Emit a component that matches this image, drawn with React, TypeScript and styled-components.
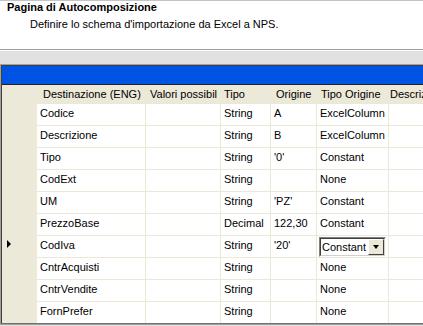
import React from 'react'
import styled, { createGlobalStyle } from 'styled-components'

const GlobalStyle = createGlobalStyle`
  html, body {
    margin: 0;
    padding: 0;
    overflow: hidden;
    background: #e1e1e1;
    font-family: "Liberation Sans", Arial, sans-serif;
    font-size: 11px;
    color: #000;
  }
`

const Page = styled.div`
  width: 423px;
  height: 326px;
  overflow: hidden;
  display: flex;
  flex-direction: column;
`

const Header = styled.header`
  height: 50px;
  box-sizing: border-box;
  background: #fff;
  border-top: 1px solid #c4c4c4;
  border-bottom: 1px solid #a0a0a0;
  box-shadow: 0 1px 0 #fff;
  padding: 0 7px;
  flex-shrink: 0;
`

const Title = styled.div`
  font-weight: bold;
  line-height: 13px;
`

const Subtitle = styled.div`
  margin: 4px 0 0 23px;
  line-height: 13px;
`

const Body = styled.main`
  padding-top: 14px;
  flex: 1;
`

const GridFrame = styled.div`
  width: 460px;
  border: 1px solid #a0a0a0;
  border-right: none;
`

const GridInner = styled.div`
  border-top: 1px solid #404040;
  border-left: 1px solid #404040;
  border-bottom: 1px solid #707070;
  background: #fff;
`

const Caption = styled.div`
  height: 18px;
  background: #0054e3;
  border-bottom: 1px solid #202020;
`

const Row = styled.div<{ $head?: boolean }>`
  display: flex;
  height: ${({ $head }) => ($head ? '18px' : '22px')};
  background: ${({ $head }) => ($head ? '#ece9d8' : '#fff')};
`

const RowHead = styled.div`
  width: 35px;
  flex-shrink: 0;
  box-sizing: border-box;
  background: #ece9d8;
  padding: 5px 0 0 5px;
`

const Pointer = styled.span`
  display: block;
  width: 0;
  height: 0;
  border-left: 4px solid #000;
  border-top: 4px solid transparent;
  border-bottom: 4px solid transparent;
`

const HeadCell = styled.div<{ $w: number; $pad?: number }>`
  width: ${({ $w }) => $w}px;
  flex-shrink: 0;
  box-sizing: border-box;
  padding: 3px 0 0 ${({ $pad }) => $pad ?? 4}px;
  line-height: 13px;
  white-space: nowrap;
  overflow: hidden;
`

const Cell = styled.div<{ $w: number }>`
  width: ${({ $w }) => $w}px;
  flex-shrink: 0;
  box-sizing: border-box;
  border-top: 1px solid #ebe8d7;
  border-right: 1px solid #ebe8d7;
  padding: 3px 0 0 3px;
  line-height: 13px;
  white-space: nowrap;
  overflow: visible;
  position: relative;
`

const Combo = styled.div`
  position: relative;
  z-index: 1;
  margin: -2px 0 0 -1px;
  width: 67px;
  height: 20px;
  box-sizing: border-box;
  border-top: 1px solid #808080;
  border-left: 1px solid #808080;
  border-right: 1px solid #fff;
  border-bottom: 1px solid #fff;
  display: flex;
`

const ComboInner = styled.div`
  flex: 1;
  display: flex;
  border-top: 1px solid #404040;
  border-left: 1px solid #404040;
  border-right: 1px solid #d4d0c8;
  border-bottom: 1px solid #d4d0c8;
  background: #fff;
`

const ComboText = styled.span`
  flex: 1;
  padding: 2px 0 0 1px;
  line-height: 13px;
`

const DropButton = styled.span`
  width: 16px;
  box-sizing: border-box;
  background: #ece9d8;
  border-top: 1px solid #fff;
  border-left: 1px solid #fff;
  border-right: 1px solid #404040;
  border-bottom: 1px solid #404040;
  display: flex;
  align-items: center;
  justify-content: center;
  &::after {
    content: '';
    border-top: 4px solid #000;
    border-left: 3.5px solid transparent;
    border-right: 3.5px solid transparent;
  }
`

const widths = [109, 75, 50, 46, 72, 120]

const columns = [
  { label: 'Destinazione (ENG)', pad: 6 },
  { label: 'Valori possibil', pad: 4 },
  { label: 'Tipo', pad: 3 },
  { label: 'Origine', pad: 5 },
  { label: 'Tipo Origine', pad: 4 },
  { label: 'Descrizione', pad: 1 },
]

const rows = [
  ['Codice', '', 'String', 'A', 'ExcelColumn'],
  ['Descrizione', '', 'String', 'B', 'ExcelColumn'],
  ['Tipo', '', 'String', "'0'", 'Constant'],
  ['CodExt', '', 'String', '', 'None'],
  ['UM', '', 'String', "'PZ'", 'Constant'],
  ['PrezzoBase', '', 'Decimal', '122,30', 'Constant'],
  ['CodIva', '', 'String', "'20'", 'Constant'],
  ['CntrAcquisti', '', 'String', '', 'None'],
  ['CntrVendite', '', 'String', '', 'None'],
  ['FornPrefer', '', 'String', '', 'None'],
]

const CURRENT = 6

export default function App() {
  return (
    <Page>
      <GlobalStyle />
      <Header>
        <Title>Pagina di Autocomposizione</Title>
        <Subtitle>Definire lo schema d'importazione da Excel a NPS.</Subtitle>
      </Header>
      <Body>
        <GridFrame>
          <GridInner>
            <Caption />
            <Row $head>
              <RowHead />
              {columns.map((c, i) => (
                <HeadCell key={c.label} $w={widths[i]} $pad={c.pad}>
                  {c.label}
                </HeadCell>
              ))}
            </Row>
            {rows.map((r, ri) => (
              <Row key={r[0]}>
                <RowHead>{ri === CURRENT && <Pointer />}</RowHead>
                {r.map((v, ci) => (
                  <Cell key={ci} $w={widths[ci]}>
                    {ri === CURRENT && ci === 4 ? (
                      <Combo>
                        <ComboInner>
                          <ComboText>{v}</ComboText>
                          <DropButton />
                        </ComboInner>
                      </Combo>
                    ) : (
                      v
                    )}
                  </Cell>
                ))}
                <Cell $w={widths[5]} />
              </Row>
            ))}
          </GridInner>
        </GridFrame>
      </Body>
    </Page>
  )
}
